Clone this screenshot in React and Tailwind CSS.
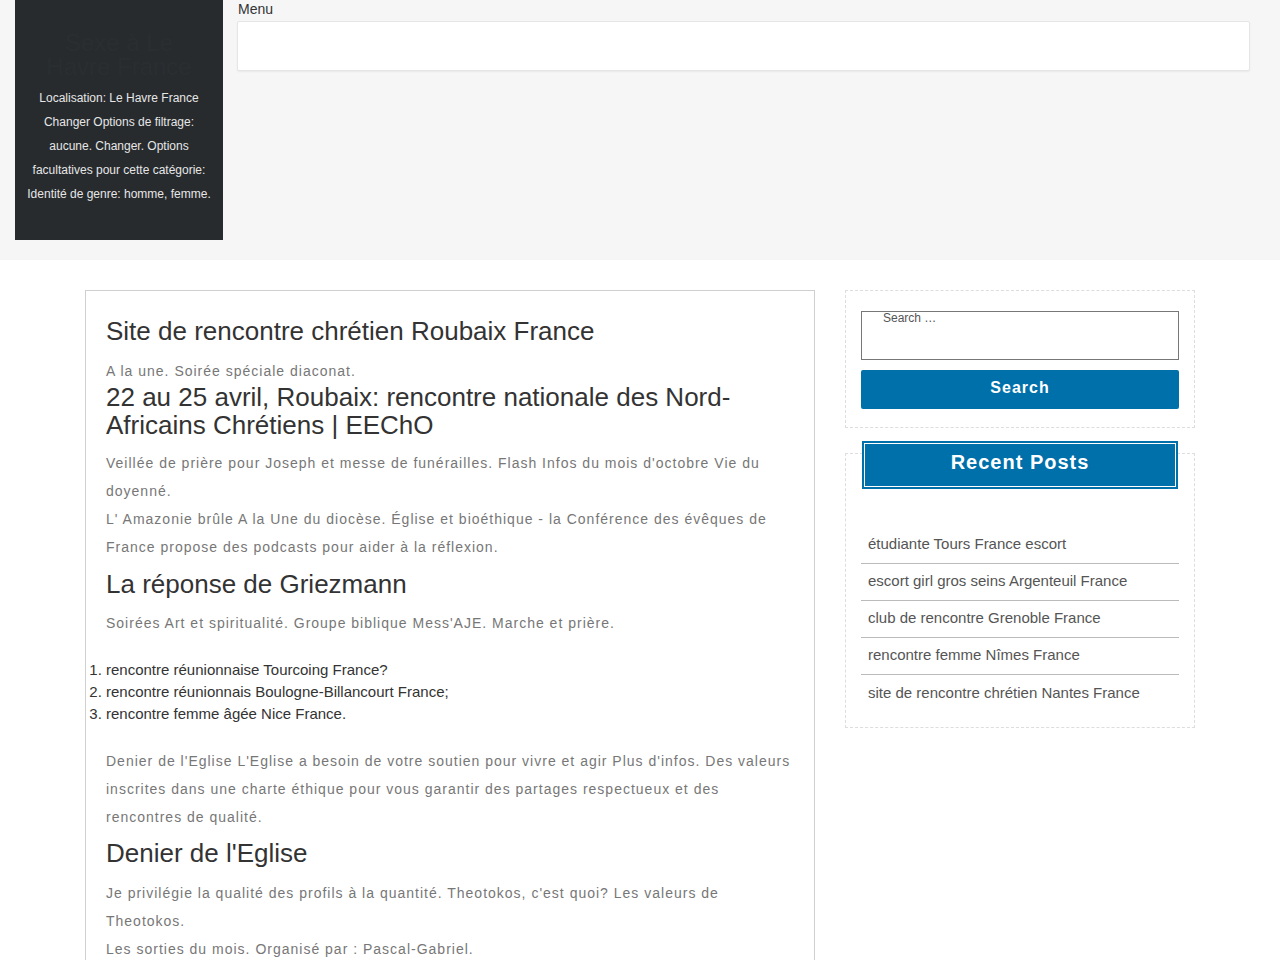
const recentPosts = [
  'étudiante Tours France escort',
  'escort girl gros seins Argenteuil France',
  'club de rencontre Grenoble France',
  'rencontre femme Nîmes France',
  'site de rencontre chrétien Nantes France',
];

const listItems = [
  'rencontre réunionnaise Tourcoing France?',
  'rencontre réunionnais Boulogne-Billancourt France;',
  'rencontre femme âgée Nice France.',
];

function Para({ children, className = '' }) {
  return (
    <p className={`text-[14px] leading-[28px] tracking-[1px] text-[#777] ${className}`}>{children}</p>
  );
}

function Heading({ children, className = '' }) {
  return <h2 className={`text-[26px] leading-[28px] text-[#333] font-normal ${className}`}>{children}</h2>;
}

export default function App() {
  return (
    <div className="min-h-screen bg-white font-['Liberation_Sans',Arial,sans-serif]">
      {/* Header band */}
      <header className="bg-[#f6f6f6] px-[15px] pb-[20px] flex gap-[14px]">
        <div className="w-[208px] h-[240px] bg-[#272b2e] px-[12px] pt-[31px] text-center shrink-0">
          <p className="px-[10px] text-[24px] leading-[24px] text-[#2a2e31]">Sexe à Le Havre France</p>
          <p className="mt-[7px] text-[12px] leading-[24px] text-[#e6e6e6]">
            Localisation: Le Havre France Changer Options de filtrage: aucune. Changer. Options facultatives pour cette catégorie: Identité de genre: homme, femme.
          </p>
        </div>
        <div className="flex-1 pr-[15px]">
          <div className="text-[14px] leading-[18px] text-[#333] pl-px">Menu</div>
          <div className="mt-[3px] h-[50px] bg-white border border-[#e6e6e6] rounded-[2px] shadow-[0_1px_2px_rgba(0,0,0,0.06)]" />
        </div>
      </header>

      {/* Main */}
      <div className="mx-auto w-[1110px] pt-[30px] flex gap-[30px] items-start">
        <main className="w-[730px] border border-[#cfcfcf] border-b-0 px-[20px] pt-[26px] pb-[40px]">
          <Heading>Site de rencontre chrétien Roubaix France</Heading>
          <Para className="mt-[14px] !leading-[24px]">A la une. Soirée spéciale diaconat.</Para>
          <Heading>22 au 25 avril, Roubaix: rencontre nationale des Nord-Africains Chrétiens | EEChO</Heading>
          <div className="mt-[10px]">
            <Para>Veillée de prière pour Joseph et messe de funérailles. Flash Infos du mois d'octobre Vie du doyenné.</Para>
            <Para>L' Amazonie brûle A la Une du diocèse. Église et bioéthique - la Conférence des évêques de France propose des podcasts pour aider à la réflexion.</Para>
          </div>
          <Heading className="mt-[9px]">La réponse de Griezmann</Heading>
          <Para className="mt-[11px]">Soirées Art et spiritualité. Groupe biblique Mess'AJE. Marche et prière.</Para>
          <ol className="mt-[22px] list-decimal list-outside pl-0 ml-0">
            {listItems.map((item) => (
              <li key={item} className="text-[15px] leading-[22px] text-[#333]">
                {item}
              </li>
            ))}
          </ol>
          <Para className="mt-[22px]">
            Denier de l'Eglise L'Eglise a besoin de votre soutien pour vivre et agir Plus d'infos. Des valeurs inscrites dans une charte éthique pour vous garantir des partages respectueux et des rencontres de qualité.
          </Para>
          <Heading className="mt-[8px]">Denier de l'Eglise</Heading>
          <div className="mt-[12px]">
            <Para>Je privilégie la qualité des profils à la quantité. Theotokos, c'est quoi? Les valeurs de Theotokos.</Para>
            <Para>Les sorties du mois. Organisé par : Pascal-Gabriel.</Para>
          </div>
        </main>

        <aside className="w-[350px]">
          {/* Search widget */}
          <div className="border border-dashed border-[#dddddd] px-[15px] pt-[20px] pb-[18px]">
            <input
              type="search"
              placeholder="Search …"
              className="block w-full h-[49px] border border-[#777] bg-white pl-[21px] pt-0 pb-[36px] text-[12px] leading-[11px] text-[#444] placeholder:text-[#555] outline-none"
            />
            <button className="mt-[10px] w-full h-[39px] rounded-[2px] bg-[#0070aa] text-white text-[16px] leading-[20px] font-bold tracking-[1px] pb-[4px]">
              Search
            </button>
          </div>

          {/* Recent posts widget */}
          <div className="mt-[25px] border border-dashed border-[#dddddd] px-[15px] pb-[15px]">
            <div className="-mt-[13px] mx-px bg-[#0070aa] p-[2px] h-[48px]">
              <div className="h-full border border-white flex justify-center pt-[6px]">
                <h3 className="text-[20px] leading-[24px] font-bold tracking-[1px] text-white">Recent Posts</h3>
              </div>
            </div>
            <ul className="mt-[38px]">
              {recentPosts.map((post, i) => (
                <li
                  key={post}
                  className={`h-[37px] flex items-center pl-[7px] pb-px text-[15px] text-[#555] ${i < recentPosts.length - 1 ? 'border-b border-[#bbbbbb]' : ''}`}
                >
                  {post}
                </li>
              ))}
            </ul>
          </div>
        </aside>
      </div>
    </div>
  );
}
